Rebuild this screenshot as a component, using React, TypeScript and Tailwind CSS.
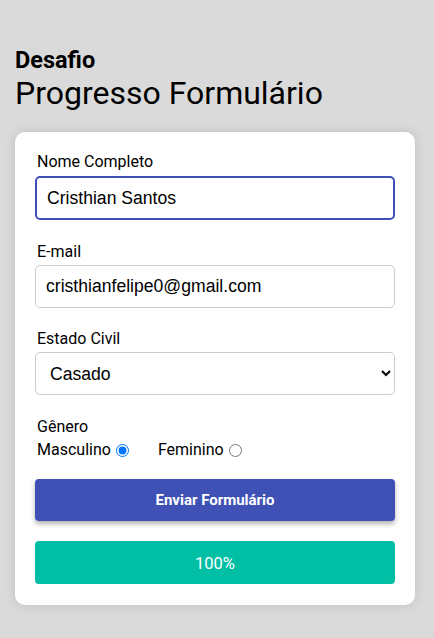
import React from "react";

export default function App() {
  return (
    <div className="min-h-[638px] w-full bg-[#dadada] px-[15px] pt-[46px] pb-[33px] font-['Roboto',sans-serif] text-black">
      <h2 className="text-[23.5px] font-bold leading-[28px]">Desafio</h2>
      <h1 className="text-[32px] font-normal leading-[38px] mb-[20px]">Progresso Formulário</h1>
      <div className="w-[400px] rounded-[10px] bg-white px-[20px] pt-[21px] pb-[21px] shadow-[0_0_12px_rgba(0,0,0,0.12)]">
        <div className="flex flex-col">
          <label className="ml-[2px] text-[16px] leading-[18px] mb-[5px]">Nome Completo</label>
          <input
            className="h-[44px] w-full rounded-[5px] border-2 border-[#3f51b5] px-[10px] font-['Liberation_Sans',Arial,sans-serif] text-[17.6px] outline-none"
            defaultValue="Cristhian Santos"
          />
        </div>
        <div className="mt-[23px] flex flex-col">
          <label className="ml-[2px] text-[16px] leading-[18px] mb-[4px]">E-mail</label>
          <input
            className="h-[43px] w-full rounded-[5px] border border-[#cccccc] px-[10px] font-['Liberation_Sans',Arial,sans-serif] text-[17.6px] outline-none"
            defaultValue="cristhianfelipe0@gmail.com"
          />
        </div>
        <div className="mt-[22px] flex flex-col">
          <label className="ml-[2px] text-[16px] leading-[18px] mb-[4px]">Estado Civil</label>
          <select
            className="h-[43px] w-full appearance-auto rounded-[5px] border border-[#cccccc] bg-white px-[10px] font-['Liberation_Sans',Arial,sans-serif] text-[17.6px] outline-none"
            defaultValue="casado"
          >
            <option value="solteiro">Solteiro</option>
            <option value="casado">Casado</option>
          </select>
        </div>
        <div className="mt-[23px] flex flex-col">
          <label className="ml-[2px] text-[16px] leading-[18px] mb-[4px]">Gênero</label>
          <div className="ml-[2px] flex items-center text-[16px] leading-[20px]">
            <label className="flex items-center">
              Masculino
              <input type="radio" name="g" defaultChecked className="ml-[5px] h-[13px] w-[13px]" />
            </label>
            <label className="ml-[29px] flex items-center">
              Feminino
              <input type="radio" name="g" className="ml-[5px] h-[13px] w-[13px]" />
            </label>
          </div>
        </div>
        <button className="mt-[19px] h-[42px] w-full rounded-[4px] bg-[#3f51b5] text-[15px] font-bold text-white shadow-[0_3px_5px_rgba(0,0,0,0.3)]">
          Enviar Formulário
        </button>
        <div className="mt-[20px] flex h-[43px] w-full items-center justify-center rounded-[4px] bg-[#00bfa5] pt-[4px] text-[16.5px] text-white">
          100%
        </div>
      </div>
    </div>
  );
}
